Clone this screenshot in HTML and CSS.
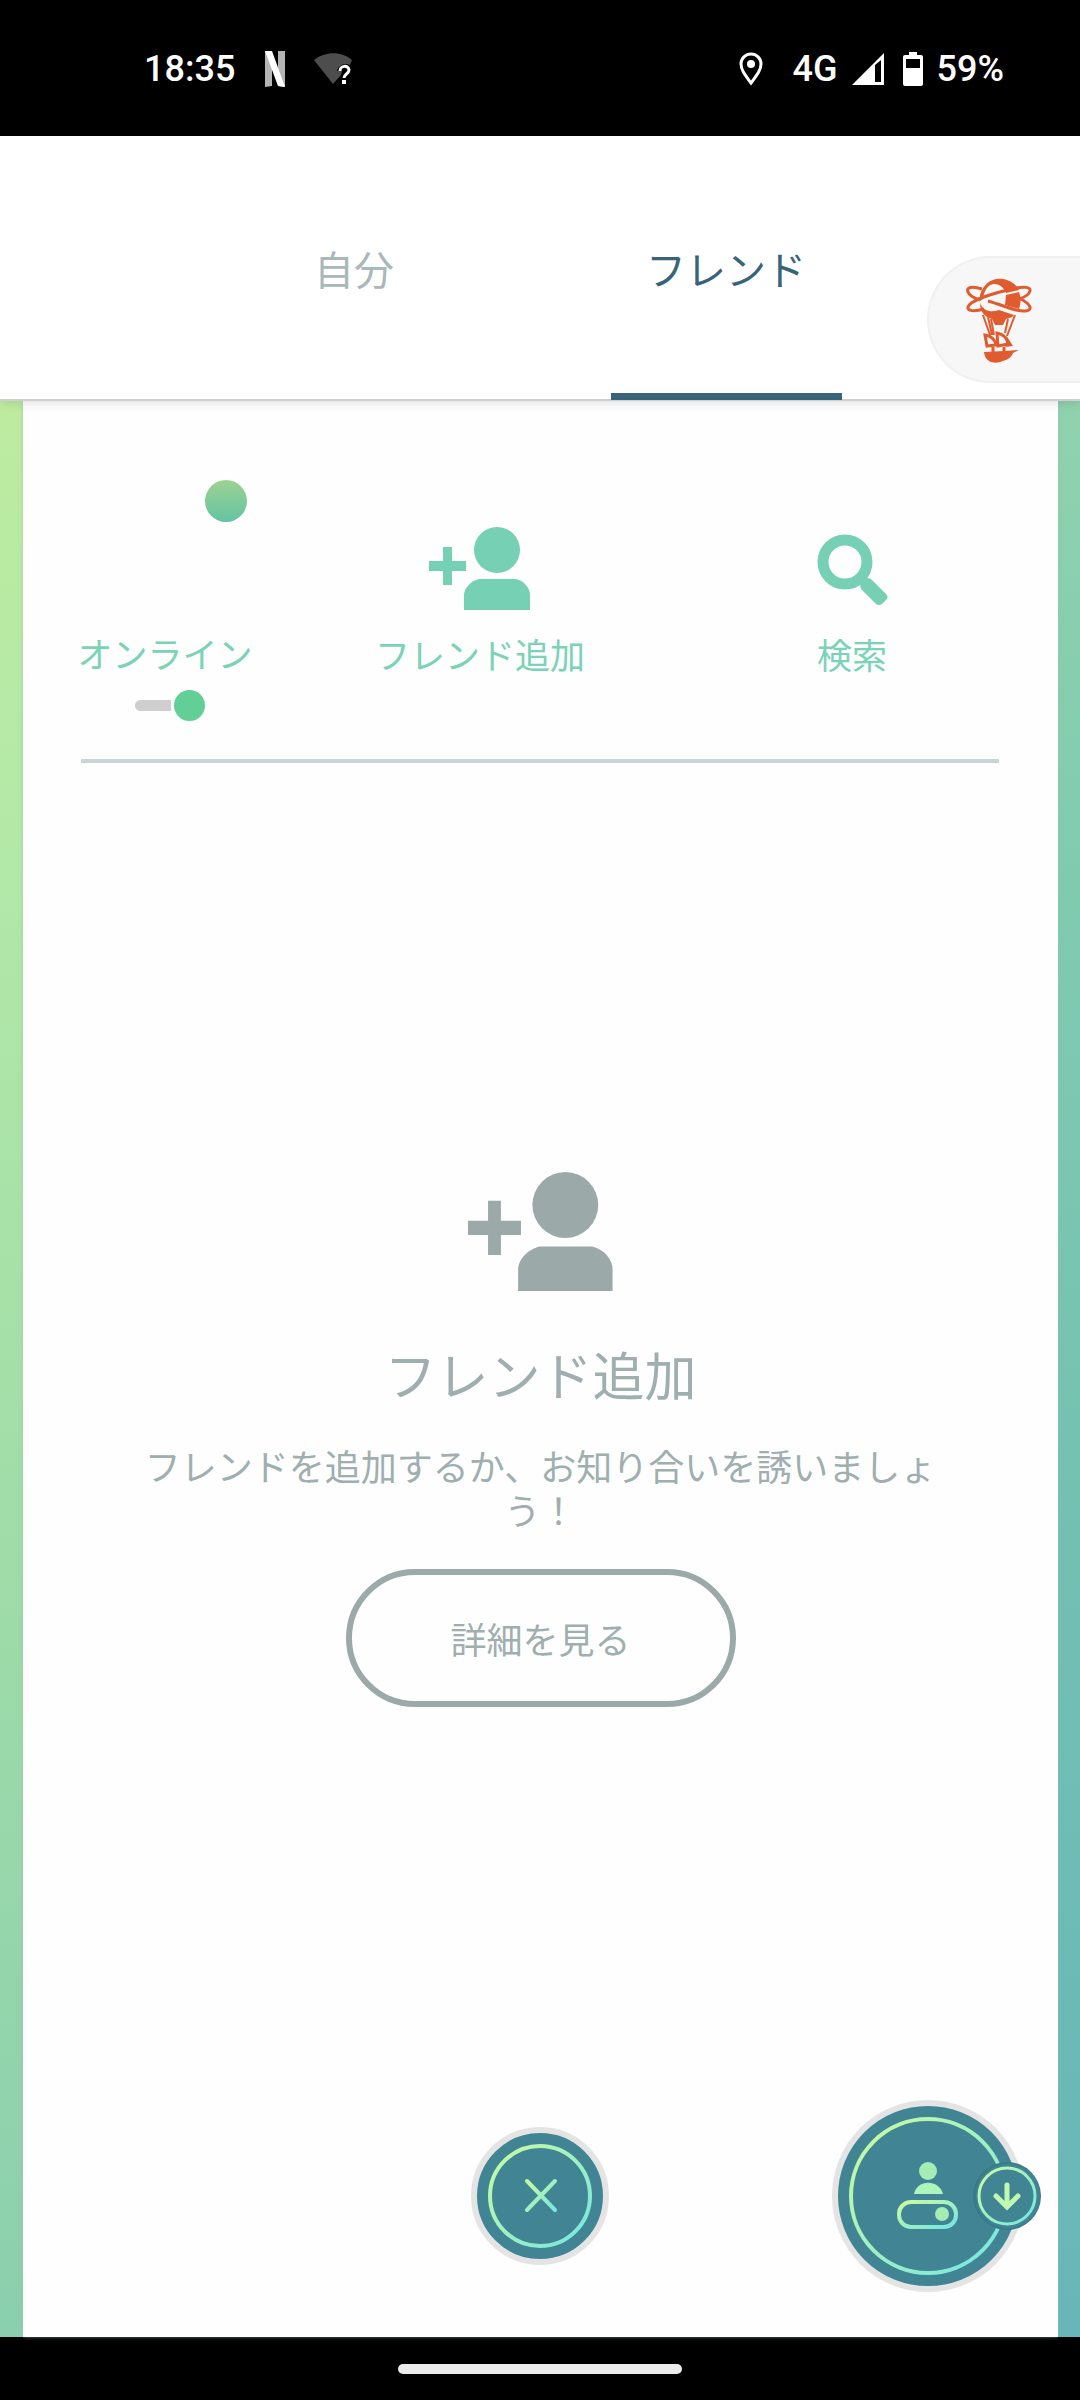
FILE: index.html
```html
<!DOCTYPE html>
<html lang="ja">
<head>
<meta charset="utf-8">
<meta name="viewport" content="width=device-width, initial-scale=1">
<title>フレンド</title>
<link rel="stylesheet" href="styles.css">
</head>
<body>
<svg class="defs" width="0" height="0" aria-hidden="true">
  <defs>
    <linearGradient id="glow" x1="0" y1="0" x2="1" y2="1">
      <stop offset="0.1" stop-color="#c4f9a6"/>
      <stop offset="0.9" stop-color="#7ce8dc"/>
    </linearGradient>
    <symbol id="add-friend" viewBox="0 0 102 83">
      <path d="M14 20h9v14h14v10H23v14h-9V44H0V34h14z"/>
      <circle cx="68" cy="23" r="23"/>
      <path d="M35 83V68c0-7 7-14 15-16h37c8 2 14 9 14 16v15z"/>
    </symbol>
  </defs>
</svg>

<div class="screen">
  <div class="status">
    <div class="status-group">
      <span class="clock">18:35</span>
      <svg class="netflix" width="20" height="36" viewBox="0 0 20 36" aria-hidden="true">
        <path fill="#b4b4b4" d="M0 0h7v35l-7 1zM13 0h7v36l-7-1z"/>
        <path fill="#fff" d="M0 0h7l13 36-7-1z"/>
      </svg>
      <svg width="40" height="32" viewBox="0 0 40 32" aria-hidden="true">
        <path fill="#4d4d4d" d="M0 7C11-2 28-2 38 7l-2 5c-6-3-12 1-13 6h5l-1 4-8 9z"/>
        <path fill="none" stroke="#fff" stroke-width="3" d="M26 18c0-6 9-6 9-1 0 4-5 4-5 8"/>
        <path fill="#fff" d="M28 27h4v4h-4z"/>
      </svg>
    </div>
    <div class="status-group">
      <svg width="24" height="34" viewBox="0 0 24 34" aria-hidden="true">
        <path fill="none" stroke="#fff" stroke-width="3" d="M12 31C6 23 2 18 2 12a10 10 0 0 1 20 0c0 6-4 11-10 19z"/>
        <circle cx="12" cy="12" r="4" fill="#fff"/>
      </svg>
      <span class="network">4G</span>
      <svg class="signal" width="32" height="32" viewBox="0 0 32 32" aria-hidden="true">
        <path fill="#fff" fill-rule="evenodd" d="M32 0v32H0zM23 12v17h6V7z"/>
      </svg>
      <svg class="battery" width="20" height="34" viewBox="0 0 20 34" aria-hidden="true">
        <path fill="#fff" fill-rule="evenodd" d="M6 0h8v3h4q2 0 2 2v27q0 2-2 2H2q-2 0-2-2V5q0-2 2-2h4zM3 7v9h14V7z"/>
      </svg>
      <span>59%</span>
    </div>
  </div>

  <header class="header">
    <nav class="tabs">
      <a class="tab" href="#me">自分</a>
      <a class="tab tab-active" href="#friends" aria-current="page">フレンド</a>
    </nav>
    <button class="bubble" type="button" aria-label="気球">
      <svg width="66" height="86" viewBox="0 0 66 86" fill="none" stroke="#e05c30" stroke-width="2" aria-hidden="true">
        <path fill="#e05c30" stroke="none" d="M14 18C18 4 30-1 41 3c6 2 10 6 12 10l-13 3C37 6 20 0 17 22l-3 2z"/>
        <path fill="#e05c30" stroke="none" d="M40 18l13-3c2 6 2 11 0 17l-14-4z"/>
        <path fill="#e05c30" stroke="none" d="M14 26c3 8 11 10 19 7l15 5c-2 3-5 3-8 4l-3 6h-8l-3-6c-7-2-12-7-12-16z"/>
        <path stroke-width="3" d="M16 12C6 9 0 10 2 15c1 3 6 6 12 8M18 32C8 35 1 34 2 30 4 24 24 17 46 12c12-3 19-2 18 2-1 4-5 6-11 8M22 24c10 3 18 6 28 9 9 2 15 1 14-3-1-3-5-6-11-9"/>
        <path d="M17 38l7 20M22 40l4 18M25 42l3 16M49 38l-8 21M42 42l-3 14"/>
        <path stroke-width="3" d="M19 58c6 1 10 4 11 10l-9 1zM31 56c6 1 10 5 11 11l-10 2zM27 70v6M38 70v6"/>
        <path fill="#e05c30" stroke="none" d="M40 58l7 11-8 1 3-4zM18 75l20-1 15-1-6 3c-2 5-6 7-10 8-9 4-18 1-19-9z"/>
      </svg>
    </button>
  </header>

  <main class="stage">
    <div class="panel">
      <section class="actions">
        <div class="action online">
          <span class="avatar"></span>
          <label for="online">オンライン</label>
          <input class="switch" id="online" type="checkbox" role="switch" checked>
        </div>
        <button class="action" type="button">
          <svg width="102" height="83" fill="#76d0b3" aria-hidden="true"><use href="#add-friend"/></svg>
          <span>フレンド追加</span>
        </button>
        <button class="action" type="button">
          <svg width="72" height="83" viewBox="-1 -7 72 83" aria-hidden="true">
            <circle cx="28" cy="28" r="22" fill="none" stroke="#76d0b3" stroke-width="11"/>
            <path fill="#76d0b3" d="M43 49q0-5 7-5 3 0 5 2l14 14q3 3 0 6l-4 4q-3 2-6 0L45 56q-2-2-2-7z"/>
          </svg>
          <span>検索</span>
        </button>
      </section>
      <section class="empty">
        <svg width="146" height="119" fill="#9ba9a9" aria-hidden="true"><use href="#add-friend"/></svg>
        <h1>フレンド追加</h1>
        <p>フレンドを追加するか、お知り合いを誘いましょう！</p>
        <button class="details" type="button">詳細を見る</button>
      </section>
    </div>
    <div class="dock">
      <button class="round close" type="button" aria-label="閉じる">
        <svg width="138" height="138" viewBox="0 0 138 138" fill="none" stroke="url(#glow)" aria-hidden="true">
          <circle cx="69" cy="69" r="66" fill="#418594" stroke="#e4e4e4" stroke-width="6"/>
          <circle cx="69" cy="69" r="50" stroke-width="4"/>
          <path stroke-width="4" stroke-linecap="round" d="M56 54l28 29M84 54L56 83"/>
        </svg>
      </button>
      <button class="round status-button" type="button" aria-label="オンライン状態">
        <svg width="210" height="192" viewBox="0 0 210 192" fill="none" aria-hidden="true">
          <circle cx="96" cy="96" r="93" fill="#418594" stroke="#e4e4e4" stroke-width="6"/>
          <circle cx="96" cy="96" r="77" stroke="url(#glow)" stroke-width="4"/>
          <circle cx="96" cy="71" r="9" fill="#a5ecb5"/>
          <path fill="#aef5bb" d="M82 94c3-15 25-15 29 0z"/>
          <rect x="67" y="102" width="57" height="25" rx="12" stroke="url(#glow)" stroke-width="4"/>
          <circle cx="110" cy="114" r="7" fill="#a5ecb5"/>
          <circle cx="175" cy="96" r="34" fill="#397a8b"/>
          <circle cx="176" cy="96" r="32" fill="#418594"/>
          <circle cx="175" cy="96" r="28" stroke="url(#glow)" stroke-width="3"/>
          <path stroke="#bff9b2" stroke-width="5" stroke-linecap="round" d="M175 85v21M164 96l11 11 11-11"/>
        </svg>
      </button>
    </div>
  </main>

  <footer class="gesture"><span class="gesture-bar"></span></footer>
</div>
</body>
</html>
```

FILE: styles.css
```css
* {
  box-sizing: border-box;
}

body {
  margin: 0;
  background: #000;
  font-family: "Noto Sans CJK JP", sans-serif;
}

button {
  padding: 0;
  border: 0;
  background: none;
  color: inherit;
  font: inherit;
}

svg {
  display: block;
}

.defs {
  position: absolute;
}

.screen {
  display: flex;
  flex-direction: column;
  min-height: 100vh;
}

/* Status bar */
.status {
  display: flex;
  align-items: center;
  justify-content: space-between;
  height: 136px;
  padding: 2px 76px 0 144px;
  color: #fff;
  font: 500 36px/40px Roboto, sans-serif;
}

.status-group {
  display: flex;
  align-items: center;
}

.clock {
  margin-right: 30px;
}

.netflix {
  margin-right: 29px;
}

.network {
  margin-left: 30px;
}

.signal {
  margin: 0 19px 0 14px;
}

.battery {
  margin-right: 14px;
}

/* Tabs */
.header {
  position: relative;
  z-index: 1;
  height: 265px;
  padding: 0 168px;
  border-bottom: 2px solid #cfd0cf;
  background: #fff;
  box-shadow: 0 2px 10px rgba(0, 0, 0, 0.12);
}

.tabs {
  display: flex;
  height: 264px;
}

.tab {
  display: flex;
  flex: 1;
  flex-direction: column;
  align-items: center;
  padding-top: 102px;
  color: #a9b8b8;
  font-size: 40px;
  line-height: 60px;
  text-decoration: none;
}

.tab-active {
  color: #376479;
}

.tab-active::after {
  width: 231px;
  height: 7px;
  margin-top: auto;
  background: #376479;
  content: "";
}

.bubble {
  position: absolute;
  top: 120px;
  right: 0;
  width: 153px;
  height: 127px;
  padding-left: 37px;
  border: 2px solid #f0f0f0;
  border-right: 0;
  border-radius: 64px 0 0 64px;
  background: #f7f7f7;
}

/* Content */
.stage {
  position: relative;
  display: flex;
  flex: 1;
  padding: 0 22px 0 23px;
  background:
    linear-gradient(#bdeca0, #b2e8a8 25%, #9fdca8 60%, #8acfae) left / 50% 100% no-repeat,
    linear-gradient(#90d2ae, #80cbb0 25%, #72c0b2 60%, #68b6b9) right / 50% 100% no-repeat;
}

.panel {
  flex: 1;
  background: #fefefe;
  box-shadow: 0 0 4px rgba(160, 190, 170, 0.6);
}

.actions {
  display: grid;
  grid-template-columns: 284fr 346fr 398fr;
  align-items: start;
  margin: 0 0 409px;
  padding: 79px 7px 0 0;
  color: #7bd3b7;
  font-size: 35px;
  line-height: 48px;
}

.actions::after {
  grid-column: 1 / -1;
  height: 4px;
  margin: 38px 52px 0 58px;
  background: #c9d5d4;
  content: "";
}

.action {
  display: flex;
  flex-direction: column;
  align-items: center;
  padding-top: 47px;
}

.action svg {
  margin-bottom: 20px;
}

.online {
  padding-top: 0;
}

.avatar {
  width: 42px;
  height: 42px;
  margin: 0 0 107px 121px;
  border-radius: 50%;
  background: linear-gradient(#9dd292, #63c3a2);
}

.switch {
  display: flex;
  align-items: center;
  justify-content: space-between;
  width: 70px;
  height: 31px;
  margin: 13px 0 0 10px;
  appearance: none;
}

.switch::before {
  width: 36px;
  height: 11px;
  border-radius: 6px 0 0 6px;
  background: #cfcfcf;
  content: "";
}

.switch::after {
  width: 31px;
  height: 31px;
  border-radius: 50%;
  background: #62cf97;
  content: "";
}

.empty {
  display: flex;
  flex-direction: column;
  align-items: center;
  padding: 0 120px;
  color: #9fafaf;
  font-size: 36px;
  line-height: 44px;
  text-align: center;
}

h1 {
  margin: 45px 0 31px;
  font-size: 52px;
  font-weight: 400;
  line-height: 76px;
}

p {
  margin: 0 0 38px;
}

.details {
  width: 390px;
  height: 138px;
  border: 6px solid #9ba9a9;
  border-radius: 69px;
}

/* Floating buttons */
.dock {
  position: absolute;
  right: 0;
  bottom: 45px;
  left: 0;
  display: grid;
  grid-template-columns: 1fr auto 1fr;
  align-items: center;
}

.close {
  grid-column: 2;
}

.status-button {
  justify-self: end;
  margin-right: 38px;
}

/* Gesture navigation */
.gesture {
  display: flex;
  align-items: center;
  justify-content: center;
  height: 63px;
}

.gesture-bar {
  width: 284px;
  height: 10px;
  border-radius: 5px;
  background: #ececec;
}
```
